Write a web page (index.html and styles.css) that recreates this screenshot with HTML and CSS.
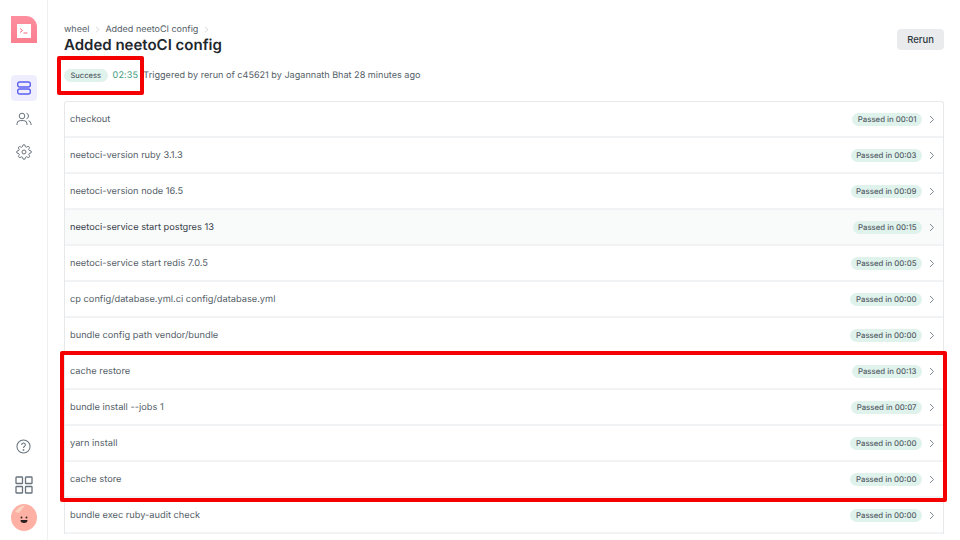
FILE: index.html
```html
<!DOCTYPE html>
<html lang="en">
<head>
<meta charset="utf-8">
<title>Added neetoCI config</title>
<link rel="stylesheet" href="styles.css">
</head>
<body>
<div class="app">
  <aside class="sidebar">
    <div class="logo"><span class="logo-inner"><svg width="10" height="10" viewBox="0 0 10 10" fill="none" stroke="#f56a7d" stroke-width="1"><path d="M1 2.5 3.5 4.5 1 6.5M4.5 7h4"/></svg></span></div>
    <nav class="nav">
      <a class="nav-item active"><svg width="16" height="14" viewBox="0 0 16 14" fill="none" stroke="#5b5fef" stroke-width="1.4"><rect x="1.7" y="1" width="12.6" height="5" rx="2"/><rect x="1.7" y="8" width="12.6" height="5" rx="2"/></svg></a>
      <a class="nav-item"><svg width="16" height="16" viewBox="0 0 16 16" fill="none" stroke="#68737d" stroke-width="1"><circle cx="6" cy="5" r="2.8"/><path d="M1 14v-1.2A3.2 3.2 0 0 1 4.200 9.600h3.600A3.200 3.200 0 0 1 11 12.800V14M10.500 2.300a2.800 2.800 0 0 1 0 5.400M12.500 9.800A3.200 3.200 0 0 1 15 12.800V14"/></svg></a>
      <a class="nav-item nav-item-last"><svg width="16" height="16" viewBox="0 0 24 24" fill="none" stroke="#68737d" stroke-width="1.500"><circle cx="12" cy="12" r="3"/><path d="M19.400 15a1.650 1.650 0 0 0 .33 1.820l.06.06a2 2 0 1 1-2.830 2.830l-.06-.06a1.650 1.650 0 0 0-2.800 1.170V21a2 2 0 1 1-4 0v-.09a1.650 1.650 0 0 0-2.800-1.170l-.06.06a2 2 0 1 1-2.830-2.830l.06-.06a1.650 1.650 0 0 0-1.170-2.800H3a2 2 0 1 1 0-4h.09a1.650 1.650 0 0 0 1.170-2.800l-.06-.06a2 2 0 1 1 2.830-2.830l.06.06a1.650 1.650 0 0 0 2.800-1.170V3a2 2 0 1 1 4 0v.09a1.650 1.650 0 0 0 2.800 1.170l.06-.06a2 2 0 1 1 2.830 2.830l-.06.06a1.650 1.650 0 0 0 1.170 2.800H21a2 2 0 1 1 0 4h-.09a1.650 1.650 0 0 0-1.510 1z"/></svg></a>
    </nav>
    <div class="sidebar-bottom">
      <svg class="help" width="15" height="15" viewBox="0 0 16 16" fill="none" stroke="#68737d" stroke-width="1.100"><circle cx="8" cy="8" r="7"/><path d="M6 6.300a2 2 0 1 1 3 1.700c-.7.400-1 .8-1 1.500"/><circle cx="8" cy="11.700" r=".4"/></svg>
      <svg class="apps" width="18" height="18" viewBox="0 0 18 18" fill="none" stroke="#68737d" stroke-width="1.300"><rect x="1" y="1" width="6.500" height="6.500" rx=".6"/><rect x="10.500" y="1" width="6.500" height="6.500" rx=".6"/><rect x="1" y="10.500" width="6.500" height="6.500" rx=".6"/><rect x="10.500" y="10.500" width="6.500" height="6.500" rx=".6"/></svg>
      <div class="avatar"><svg width="26" height="26" viewBox="0 0 26 26"><path d="M4 7A12.500 12.500 0 0 1 14 .6L8 8z" fill="#fbd3c0"/><circle cx="10.500" cy="12.500" r=".9" fill="#2b2020"/><circle cx="15.500" cy="12.500" r=".9" fill="#2b2020"/><path d="M9.500 15h7a3.500 3 0 0 1-7 0z" fill="#2b2020"/></svg></div>
    </div>
  </aside>
  <main class="main">
    <header class="header">
      <div>
        <div class="crumbs"><span>wheel</span><svg class="crumb-sep" width="5" height="7" viewBox="0 0 5 7" fill="none" stroke="#d5d9dd"><path d="m1 .8 3 2.700-3 2.700"/></svg><span>Added neetoCI config</span><svg class="crumb-sep" width="5" height="7" viewBox="0 0 5 7" fill="none" stroke="#d5d9dd"><path d="m1 .8 3 2.700-3 2.700"/></svg></div>
        <h1 class="title">Added neetoCI config</h1>
      </div>
      <button class="rerun">Rerun</button>
    </header>
    <div class="meta">
      <span class="tag tag-status">Success</span>
      <span class="time">02:35</span>
      <span class="trigger">Triggered by rerun of c45621 by Jagannath Bhat 28 minutes ago</span>
    </div>
    <div class="steps">
      <div class="step"><span class="step-name">checkout</span><span class="tag">Passed in 00:01</span><svg class="chev" width="6" height="9" viewBox="0 0 6 9" fill="none" stroke="#7e8891"><path d="m1 1 3.500 3.500L1 8"/></svg></div>
      <div class="step"><span class="step-name">neetoci-version ruby 3.1.3</span><span class="tag">Passed in 00:03</span><svg class="chev" width="6" height="9" viewBox="0 0 6 9" fill="none" stroke="#7e8891"><path d="m1 1 3.500 3.500L1 8"/></svg></div>
      <div class="step"><span class="step-name">neetoci-version node 16.5</span><span class="tag">Passed in 00:09</span><svg class="chev" width="6" height="9" viewBox="0 0 6 9" fill="none" stroke="#7e8891"><path d="m1 1 3.500 3.500L1 8"/></svg></div>
      <div class="step step-hover"><span class="step-name">neetoci-service start postgres 13</span><span class="tag">Passed in 00:15</span><svg class="chev" width="6" height="9" viewBox="0 0 6 9" fill="none" stroke="#7e8891"><path d="m1 1 3.500 3.500L1 8"/></svg></div>
      <div class="step"><span class="step-name">neetoci-service start redis 7.0.5</span><span class="tag">Passed in 00:05</span><svg class="chev" width="6" height="9" viewBox="0 0 6 9" fill="none" stroke="#7e8891"><path d="m1 1 3.500 3.500L1 8"/></svg></div>
      <div class="step"><span class="step-name">cp config/database.yml.ci config/database.yml</span><span class="tag">Passed in 00:00</span><svg class="chev" width="6" height="9" viewBox="0 0 6 9" fill="none" stroke="#7e8891"><path d="m1 1 3.500 3.500L1 8"/></svg></div>
      <div class="step"><span class="step-name">bundle config path vendor/bundle</span><span class="tag">Passed in 00:00</span><svg class="chev" width="6" height="9" viewBox="0 0 6 9" fill="none" stroke="#7e8891"><path d="m1 1 3.500 3.500L1 8"/></svg></div>
      <div class="step"><span class="step-name">cache restore</span><span class="tag">Passed in 00:13</span><svg class="chev" width="6" height="9" viewBox="0 0 6 9" fill="none" stroke="#7e8891"><path d="m1 1 3.500 3.500L1 8"/></svg></div>
      <div class="step"><span class="step-name">bundle install --jobs 1</span><span class="tag">Passed in 00:07</span><svg class="chev" width="6" height="9" viewBox="0 0 6 9" fill="none" stroke="#7e8891"><path d="m1 1 3.500 3.500L1 8"/></svg></div>
      <div class="step"><span class="step-name">yarn install</span><span class="tag">Passed in 00:00</span><svg class="chev" width="6" height="9" viewBox="0 0 6 9" fill="none" stroke="#7e8891"><path d="m1 1 3.500 3.500L1 8"/></svg></div>
      <div class="step"><span class="step-name">cache store</span><span class="tag">Passed in 00:00</span><svg class="chev" width="6" height="9" viewBox="0 0 6 9" fill="none" stroke="#7e8891"><path d="m1 1 3.500 3.500L1 8"/></svg></div>
      <div class="step"><span class="step-name">bundle exec ruby-audit check</span><span class="tag">Passed in 00:00</span><svg class="chev" width="6" height="9" viewBox="0 0 6 9" fill="none" stroke="#7e8891"><path d="m1 1 3.500 3.500L1 8"/></svg></div>
    </div>
  </main>
  <div class="mark mark-status"></div>
  <div class="mark mark-steps"></div>
</div>
</body>
</html>
```
FILE: styles.css
```css
* { box-sizing: border-box; }
html, body { margin: 0; height: 100%; overflow: hidden; background: #fff; }
body { font-family: Inter, "Liberation Sans", sans-serif; color: #2f3941; text-rendering: geometricPrecision; }
.app { position: relative; display: flex; width: 960px; height: 540px; overflow: hidden; }

.sidebar { flex: 0 0 48px; height: 540px; border-right: 1px solid #eef0f2; display: flex; flex-direction: column; align-items: center; padding: 16px 0 9px; }
.logo { width: 26px; height: 27px; padding-top: 3px; background: linear-gradient(180deg, #fd8f9e, #f9808f); border-radius: 0 11px 0 0; display: flex; align-items: center; justify-content: center; }
.logo-inner { width: 14px; height: 14px; background: #fff; display: flex; align-items: center; justify-content: center; }
.nav { display: flex; flex-direction: column; align-items: center; gap: 5px; margin-top: 32px; }
.nav-item { width: 26px; height: 26px; border-radius: 4px; display: flex; align-items: center; justify-content: center; }
.nav-item.active { background: #eeeefe; }
.nav-item-last { margin-top: 2px; }
.sidebar-bottom { margin-top: auto; display: flex; flex-direction: column; align-items: center; }
.help { margin-bottom: 22px; }
.apps { margin-bottom: 10px; }
.avatar { width: 26px; height: 27px; border-radius: 50%; background: #fdb0a3; overflow: hidden; display: flex; align-items: center; }
.avatar svg { display: block; }

.main { flex: 1; min-width: 0; padding: 23px 16px 0; }
.header { display: flex; justify-content: space-between; align-items: flex-start; }
.crumbs { display: flex; align-items: center; gap: 5.500px; font-size: 9px; line-height: 13px; color: #545e67; }
.crumb-sep { flex: none; }
.title { margin: -1px 0 0; font-size: 15px; line-height: 20px; font-weight: 600; color: #1f272e; }
.rerun { margin-top: 6px; width: 47px; height: 21px; padding: 0; border: 0; border-radius: 4px; background: #e9ebed; font: 500 9.500px Inter, "Liberation Sans", sans-serif; color: #2f3941; }
.meta { display: flex; align-items: center; margin-top: 13px; height: 14px; font-size: 9.100px; }
.time { margin-left: 5px; color: #3f9c7f; font-size: 9px; letter-spacing: .2px; }
.trigger { margin-left: 5px; color: #545e67; }
.tag { display: inline-flex; align-items: center; height: 13px; padding: 0 5.500px; border-radius: 7px; background: #e0f2ec; color: #545e67; font-size: 7.800px; font-weight: 500; white-space: nowrap; }
.tag-status { padding: 0 6.500px; font-size: 7.500px; flex: none; }

.steps { margin-top: 19px; border: 1px solid #e6e8ea; border-bottom: 0; border-radius: 3px 3px 0 0; }
.step { display: flex; align-items: center; height: 36px; padding: 0 8px 0 5px; border-bottom: 2px solid #f2f3f4; font-size: 9.250px; color: #545e67; }
.step-name { flex: 1; }
.step-hover { background: #f9fafa; color: #374049; }
.chev { margin-left: 7px; flex: none; }

.mark { position: absolute; border: 4px solid #f50000; border-radius: 2px; pointer-events: none; }
.mark-status { left: 57px; top: 56px; width: 87px; height: 39px; }
.mark-steps { left: 60px; top: 351px; width: 887px; height: 151px; }
```
